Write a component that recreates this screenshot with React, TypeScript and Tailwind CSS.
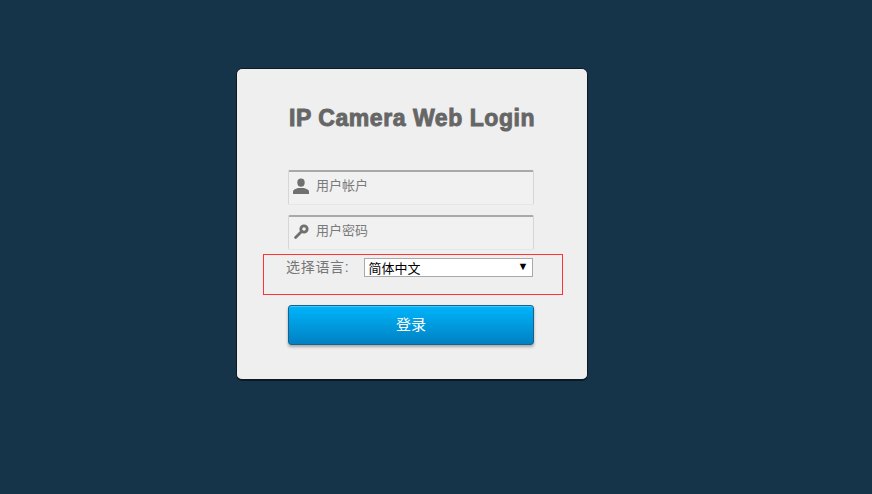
import { ReactNode } from "react";

const CJK = "font-['Liberation_Sans','Noto_Sans_CJK_SC',sans-serif]";

function LoginField({ icon, placeholder }: { icon: ReactNode; placeholder: string }) {
  return (
    <div className="flex h-[35px] w-[246px] items-center rounded-[2px] border border-t-2 border-[#e4e6e9] border-t-[#a9a9a9] border-r-[#d6d6d6] border-l-[#d6d6d6] bg-[#f1f1f1] pb-[6px]">
      <span className="ml-[2px] mt-[2px] flex w-[20px] justify-center text-[#707070]">{icon}</span>
      <span className="ml-[5px] text-[13px] leading-none text-[#7a7a7a]">{placeholder}</span>
    </div>
  );
}

function UserIcon() {
  return (
    <svg width="16" height="16" viewBox="0 0 16 16" fill="currentColor" aria-hidden="true">
      <ellipse cx="8" cy="4.6" rx="3.7" ry="4.2" />
      <path d="M0 16v-2.2c0-2.2 3-3.2 5.4-3.8h5.2c2.4.6 5.4 1.6 5.4 3.8V16z" />
    </svg>
  );
}

function KeyIcon() {
  return (
    <svg width="15" height="15" viewBox="0 0 15 15" fill="none" aria-hidden="true">
      <circle cx="10" cy="5" r="3.2" stroke="currentColor" strokeWidth="2.8" />
      <path d="M7.5 7.5 1.6 13.4" stroke="currentColor" strokeWidth="2.8" strokeLinecap="round" />
    </svg>
  );
}

export default function App() {
  return (
    <div className={`min-h-[494px] bg-[#153349] pl-[236px] pt-[68px] ${CJK}`}>
      <div className="h-[313px] w-[352px] rounded-[6px] border border-b-2 border-[#0c1a24] bg-[#efefef] pt-[34px]">
        <h1 className="ml-[52px] w-[250px] whitespace-nowrap font-['Liberation_Sans',sans-serif] text-[23px] font-bold leading-[30px] tracking-[0.55px] text-[#666] [-webkit-text-stroke:0.9px_#666]">
          IP Camera Web Login
        </h1>

        <div className="ml-[51px] mt-[37px] flex flex-col gap-[10px]">
          <LoginField icon={<UserIcon />} placeholder="用户帐户" />
          <LoginField icon={<KeyIcon />} placeholder="用户密码" />
        </div>

        <div className="ml-[26px] mt-[4px] flex h-[41px] w-[300px] items-start border border-[#ff3333] pt-[3px]">
          <span className="ml-[22px] mt-[1px] text-[14px] leading-[16px] tracking-[0.7px] text-[#777]">选择语言:</span>
          <div className="ml-[15px] flex h-[19px] w-[169px] items-center justify-between border border-[#a9a9a9] bg-white pl-[3px] pr-[4px]">
            <span className="mt-[2px] text-[13px] leading-none text-black">简体中文</span>
            <span className="mb-[3px] text-[11px] leading-none text-black">▼</span>
          </div>
        </div>

        <button
          type="button"
          className="ml-[51px] mt-[10px] flex h-[40px] w-[246px] items-center justify-center rounded-[3px] border border-[#17618c] bg-gradient-to-b from-[#00b5fb] to-[#0081c3] text-[15px] text-white shadow-[inset_0_1px_0_rgba(255,255,255,0.25),0_2px_3px_rgba(0,0,0,0.3)]"
        >
          登录
        </button>
      </div>
    </div>
  );
}
